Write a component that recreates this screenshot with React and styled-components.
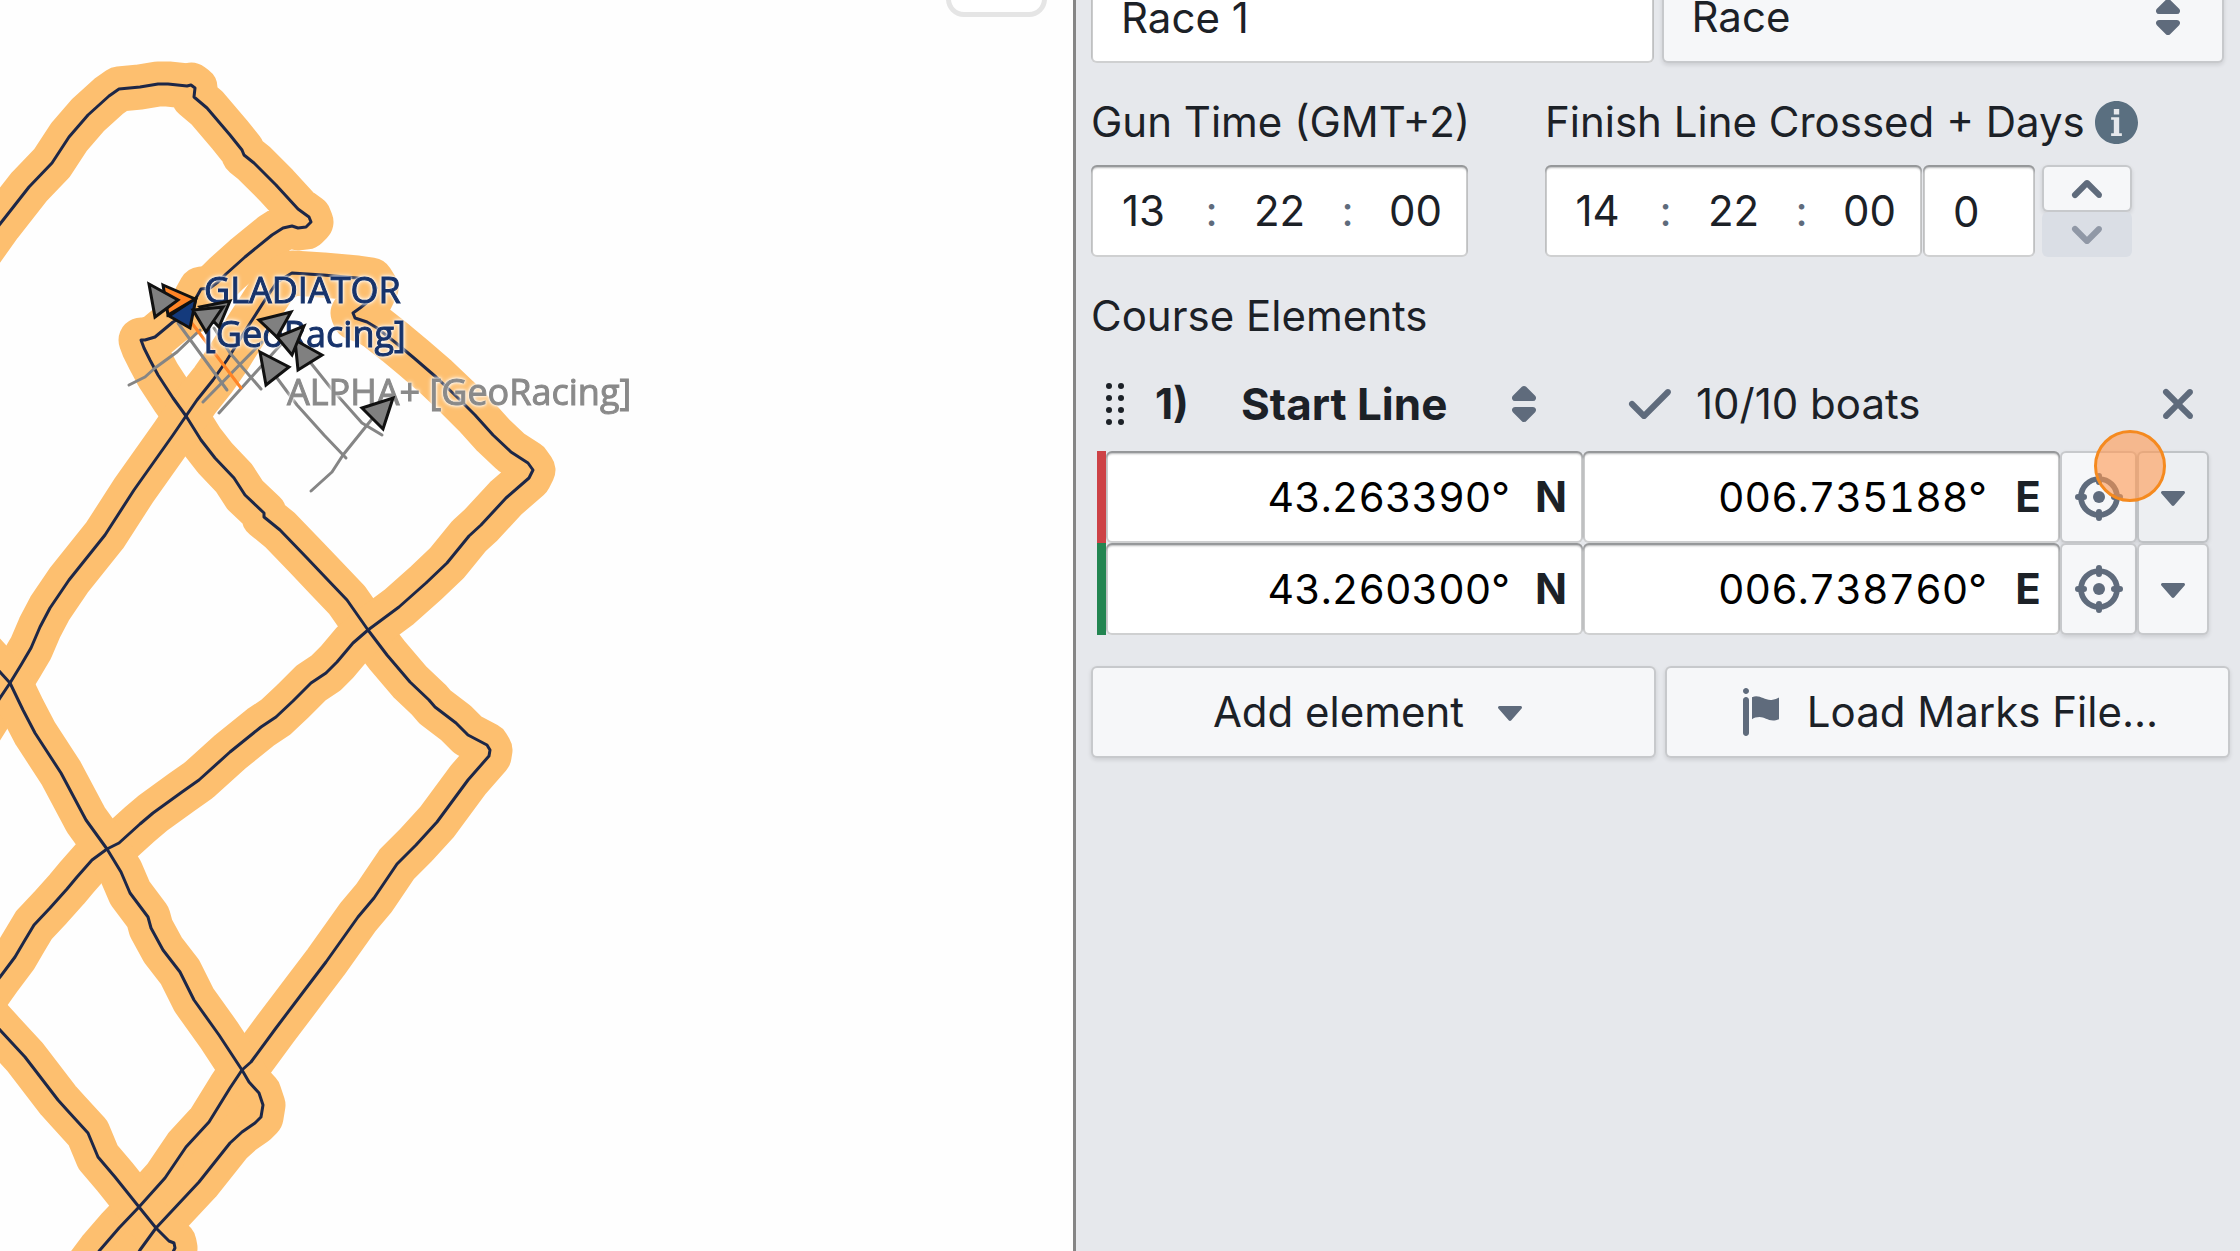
import React, { useId } from "react";
import styled, { createGlobalStyle } from "styled-components";

const GlobalStyle = createGlobalStyle`
  *, *::before, *::after { box-sizing: border-box; }
  body { margin: 0; background: #fefefe; overflow: hidden; }
  body, input, select, button {
    font-family: Inter, "Liberation Sans", sans-serif;
    font-size: 42px;
    line-height: 54px;
    color: #1c2127;
  }
  input, select, button { margin: 0; border: 0; background: none; }
`;

/* ---------- icons ---------- */

const ICON_PATHS = {
  doubleCaret:
    "M5 7h6a1.003 1.003 0 00.71-1.71l-3-3C8.53 2.11 8.28 2 8 2s-.53.11-.71.29l-3 3A1.003 1.003 0 005 7zm6 2H5a1.003 1.003 0 00-.71 1.71l3 3c.18.18.43.29.71.29s.53-.11.71-.29l3-3A1.003 1.003 0 0011 9z",
  caretDown:
    "M12 6.5c0-.28-.22-.5-.5-.5h-7a.495.495 0 00-.37.83l3.5 4c.09.1.22.17.37.17s.28-.07.37-.17l3.5-4c.08-.09.13-.2.13-.33z",
  cross:
    "M9.41 8l3.29-3.29c.19-.18.3-.43.3-.71a1.003 1.003 0 00-1.71-.71L8 6.59l-3.29-3.3a1.003 1.003 0 00-1.42 1.42L6.59 8 3.3 11.29c-.19.18-.3.43-.3.71a1.003 1.003 0 001.71.71L8 9.41l3.29 3.29c.18.19.43.3.71.3a1.003 1.003 0 00.71-1.71L9.41 8z",
  tick: "M14 3c-.28 0-.53.11-.71.29L6 10.59l-3.29-3.3a1.003 1.003 0 00-1.42 1.42l4 4c.18.18.43.29.71.29s.53-.11.71-.29l8-8A1.003 1.003 0 0014 3z",
  chevronUp:
    "M12.71 9.29l-4-4C8.53 5.11 8.28 5 8 5s-.53.11-.71.29l-4 4a1.003 1.003 0 001.42 1.42L8 7.41l3.29 3.29c.18.19.43.3.71.3a1.003 1.003 0 00.71-1.71z",
  chevronDown:
    "M12 5c-.28 0-.53.11-.71.29L8 8.59l-3.29-3.3a1.003 1.003 0 00-1.42 1.42l4 4c.18.18.43.29.71.29s.53-.11.71-.29l4-4A1.003 1.003 0 0012 5z",
  info: "M8 0C3.58 0 0 3.58 0 8s3.58 8 8 8 8-3.58 8-8-3.58-8-8-8zM7 3h2v2H7V3zm3 10H6v-1h1V7H6V6h3v6h1v1z",
  flag: "M3 3c-.55 0-1 .45-1 1v11c0 .55.45 1 1 1s1-.45 1-1V4c0-.55-.45-1-1-1zM3 0c-.55 0-1 .45-1 1s.45 1 1 1 1-.45 1-1-.45-1-1-1zM5 3.1C7.5 2 9 4.2 11.5 4c1.100-.1 1.900-.5 2.500-.8V10.400C11 11.700 9.500 9.700 7.500 9.700c-1 0-1.900.3-2.500.7z",
};

const Svg = styled.svg`
  display: block;
  flex: none;
  width: ${(p) => p.$size}px;
  height: ${(p) => p.$size}px;
  fill: ${(p) => p.$color};
  pointer-events: none;
`;

function Icon({ name, size = 48, color = "#5f6b7c" }) {
  return (
    <Svg viewBox="0 0 16 16" $size={size} $color={color} aria-hidden="true">
      <path fillRule="evenodd" d={ICON_PATHS[name]} />
    </Svg>
  );
}

function LocateIcon() {
  return (
    <Svg viewBox="0 0 16 16" $size={48} $color="#5f6b7c" aria-hidden="true">
      <circle cx="8" cy="8" r="6" fill="none" stroke="#5f6b7c" strokeWidth="1.900" />
      <circle cx="8" cy="8" r="2" />
      <path
        d="M8 1v2M8 13v2M1 8h2M13 8h2"
        stroke="#5f6b7c"
        strokeWidth="2"
        strokeLinecap="round"
      />
    </Svg>
  );
}

function DragIcon() {
  return (
    <Svg viewBox="0 0 48 48" $size={48} $color="#1c2127" aria-hidden="true">
      {[6, 18, 30, 42].map((y) => (
        <g key={y}>
          <circle cx="18" cy={y} r="3" />
          <circle cx="30" cy={y} r="3" />
        </g>
      ))}
    </Svg>
  );
}

/* ---------- layout ---------- */

const Page = styled.div`
  display: grid;
  grid-template-columns: minmax(0, 1fr) 1167px;
  min-height: 100vh;
`;

const MapPane = styled.main`
  position: relative;
  overflow: hidden;
`;

const MapCanvas = styled.svg`
  display: block;
  width: 100%;
  height: 100vh;
`;

const MapButton = styled.button`
  position: absolute;
  top: -84px;
  right: 26px;
  width: 101px;
  height: 101px;
  border: 5px solid #e5e5e5;
  border-radius: 18px;
  background: #fff;
`;

const Panel = styled.aside`
  border-left: 3px solid #858585;
  background: #e6e8ec;
  padding: 0 10px 0 15px;
  overflow: hidden;
`;

const NameRow = styled.div`
  display: grid;
  grid-template-columns: minmax(0, 1fr) minmax(0, 1fr);
  gap: 8px;
  margin: -29px 6px 32px 0;
`;

const TimeRow = styled.div`
  display: grid;
  grid-template-columns: 377px minmax(0, 1fr);
  gap: 77px;
  margin-bottom: 32px;
`;

const Label = styled.label`
  display: flex;
  align-items: center;
  gap: 10px;
  height: 54px;
  margin-bottom: 16px;
  white-space: nowrap;
`;

const SectionTitle = styled.div`
  height: 54px;
  margin-bottom: 34px;
`;

const fieldShadow = `
  border-radius: 6px;
  background: #fff;
  box-shadow: inset 0 0 0 2px rgba(17, 20, 24, 0.2), inset 0 3px 2px rgba(17, 20, 24, 0.3);
`;

const TextInput = styled.input`
  ${fieldShadow}
  width: ${(p) => p.$width || "100%"};
  height: 92px;
  padding: 0 30px;
`;

const SelectBox = styled.div`
  display: flex;
  align-items: center;
  position: relative;
  width: ${(p) => p.$width || "auto"};
  ${(p) =>
    !p.$plain &&
    `height: 92px;
     border-radius: 6px;
     background: #f6f7f9;
     box-shadow: inset 0 0 0 2px rgba(17, 20, 24, 0.2), 0 2px 4px rgba(17, 20, 24, 0.12);`}

  select {
    appearance: none;
    width: 100%;
    height: 100%;
    padding: 0 ${(p) => (p.$plain ? "0" : "30px")};
    font-size: ${(p) => (p.$plain ? 44 : 42)}px;
    font-weight: ${(p) => (p.$plain ? 700 : 400)};
  }

  svg {
    position: absolute;
    right: ${(p) => (p.$plain ? "0" : "32px")};
  }
`;

function Select({ label, value, plain, width }) {
  return (
    <SelectBox $plain={plain} $width={width}>
      <select aria-label={label} defaultValue={value}>
        <option>{value}</option>
      </select>
      <Icon name="doubleCaret" />
    </SelectBox>
  );
}

const TimeBox = styled.div`
  ${fieldShadow}
  display: flex;
  align-items: center;
  width: 377px;
  height: 92px;
  padding: 0 5px;

  input {
    width: 95px;
    padding: 0;
    text-align: center;
  }

  span {
    width: 41px;
    color: #5f6b7c;
    text-align: center;
  }
`;

function TimeField({ id, value, label }) {
  const units = ["hours", "minutes", "seconds"];
  return (
    <TimeBox role="group" aria-label={label}>
      {value.map((part, i) => (
        <React.Fragment key={units[i]}>
          {i > 0 && <span>:</span>}
          <input id={i === 0 ? id : undefined} aria-label={units[i]} defaultValue={part} />
        </React.Fragment>
      ))}
    </TimeBox>
  );
}

const FinishFields = styled.div`
  display: flex;
  gap: 1px;
`;

const Stepper = styled.div`
  display: grid;
  grid-template-rows: 47px 45px;
  width: 90px;
  margin-left: 6px;
`;

const Button = styled.button`
  display: flex;
  align-items: center;
  justify-content: center;
  gap: ${(p) => p.$gap || 0}px;
  height: ${(p) => p.$height || 92}px;
  padding: 0;
  border-radius: 6px;
  background: ${(p) => (p.$hovered ? "#edeff2" : "#f6f7f9")};
  box-shadow: inset 0 0 0 2px rgba(17, 20, 24, 0.2), 0 2px 4px rgba(17, 20, 24, 0.12);

  &:disabled {
    background: #dadee5;
    box-shadow: none;
  }
`;

const CourseElement = styled.section`
  position: relative;
  padding: 0 21px 0 6px;
  margin-bottom: 31px;
`;

const CourseHeader = styled.div`
  display: flex;
  align-items: center;
  height: 54px;
  margin-bottom: 20px;
`;

const Handle = styled.span`
  display: flex;
  justify-content: center;
  width: 36px;
  margin-right: 22px;
`;

const Order = styled.span`
  width: 86px;
  font-weight: 700;
`;

const Status = styled.span`
  display: flex;
  align-items: center;
  gap: 22px;
  margin-left: 78px;
`;

const PlainButton = styled.button`
  display: flex;
  padding: 0;
  margin: 0 7px 0 auto;
`;

const CoordRow = styled.div`
  display: grid;
  grid-template-columns: 9px minmax(0, 1fr) minmax(0, 1fr) 77px 72px;

  &::before {
    content: "";
    background: ${(p) => p.$color};
  }
`;

const CoordBox = styled.div`
  ${fieldShadow}
  display: flex;
  align-items: center;
  height: 92px;
  padding-right: 16px;

  input {
    flex: 1;
    min-width: 0;
    width: 0;
    padding: 0 25px 0 0;
    font-size: 41px;
    text-align: right;
    font-variant-numeric: tabular-nums;
    color: #000;
  }

  button {
    width: 32px;
    padding: 0;
    font-weight: 700;
    text-align: center;
  }
`;

const Actions = styled.div`
  display: grid;
  grid-template-columns: minmax(0, 1fr) minmax(0, 1fr);
  gap: 9px;
`;

const ClickMarker = styled.span`
  position: absolute;
  top: 53px;
  right: 64px;
  width: 72px;
  height: 72px;
  border: 3px solid #f58a1f;
  border-radius: 50%;
  background: rgba(255, 152, 80, 0.6);
  pointer-events: none;
`;

/* ---------- map data ---------- */

const TRACKS = [
  "-20,252 0,224 29,187 52,163 69,137 88,115 109,96 119,89 140,87 158,84 168,84 187,86 191,85 195,88 194,97 207,108 230,135 242,150 244,155 254,163 276,185 298,209 309,217 311,222 306,227 298,228 292,226 283,228 272,235 245,257 226,274 218,282 210,288 201,289 196,298 193,311 173,322 155,337 145,340 141,340 144,348 150,360 158,375 173,398 186,416 201,440 215,458 234,478 245,495 264,513 264,517 280,530 307,558 326,578 347,600 368,630 387,655 410,682 429,700 435,707 456,723 468,735 487,745 490,750 489,756 468,780 437,822 416,845 397,864 374,898 358,917 326,962 307,987 276,1028 251,1062 242,1070 230,1088 209,1122 186,1147 165,1178 139,1207 119,1228 100,1250 85,1270",
  "-20,730 0,698 10,683 21,665 31,648 40,627 50,608 69,580 105,535 134,490 173,435 186,416 197,400 213,380 227,360 247,328 265,300 277,282 292,273 323,275 357,278 371,280 376,288 370,300 360,308 353,313 355,318 367,322 377,328 396,343 414,358 436,377 457,397 475,415 493,435 511,452 528,463 533,470 529,478 506,498 481,525 469,536 447,563 426,583 399,607 368,630 353,643 337,662 326,673 311,683 293,701 276,717 261,727 230,752 199,780 182,792 153,813 140,824 119,843 107,849 92,860 77,877 67,889 50,908 34,925 25,940 15,957 0,977 -20,1005",
  "-20,650 0,672 10,683 23,710 35,733 61,773 86,820 107,849 121,872 130,893 148,917 151,928 163,950 180,972 194,1000 219,1035 242,1070 249,1082 259,1093 263,1105 261,1117 255,1123 242,1132 230,1143 199,1182 156,1228 140,1250 128,1270",
  "-20,1008 0,1030 25,1057 58,1100 67,1110 88,1133 98,1157 115,1177 139,1207 156,1228 169,1241 174,1243 175,1248 168,1262",
];

const TAILS = [
  { color: "#858585", points: "178,323 227,390" },
  { color: "#858585", points: "200,330 177,352 155,368 145,377 129,385" },
  { color: "#858585", points: "214,328 230,353 261,389" },
  { color: "#858585", points: "262,342 203,402" },
  { color: "#858585", points: "284,341 219,413" },
  { color: "#ff8426", points: "188,318 241,388" },
  { color: "#858585", points: "277,378 297,405 324,435 346,458" },
  { color: "#858585", points: "310,362 330,387 362,423 382,435" },
  { color: "#858585", points: "376,414 343,455 332,472 311,491" },
];

const BOATS = [
  { color: "#808080", points: "230,301 219,327 200,307" },
  { color: "#143a7c", points: "196,298 190,328 169,316" },
  { color: "#ff8426", points: "163,285 195,299 168,315" },
  { color: "#808080", points: "149,284 178,300 155,317" },
  { color: "#808080", points: "223,307 206,332 193,310" },
  { color: "#808080", points: "295,340 322,355 298,370" },
  { color: "#808080", points: "304,326 292,355 277,337" },
  { color: "#808080", points: "259,320 291,312 277,337" },
  { color: "#808080", points: "260,352 289,367 266,385" },
  { color: "#808080", points: "362,408 393,398 383,429" },
];

const BoatLabel = styled.text`
  font-family: "Open Sans", "Noto Sans", sans-serif;
  font-size: 36px;
  font-weight: 400;
  fill: ${(p) => p.$color};
  stroke: ${(p) => p.$color};
  stroke-width: 1px;
  filter: drop-shadow(0 0 1px #fff) drop-shadow(0 0 2px #fff);
`;

function TrackMap() {
  return (
    <MapCanvas role="img" aria-label="Race tracks">
      <g fill="none" stroke="#fdbf6f" strokeWidth="45" strokeLinejoin="round">
        {TRACKS.map((points) => (
          <polyline key={points} points={points} />
        ))}
      </g>
      <g fill="none" stroke="#1d2747" strokeWidth="3" strokeLinejoin="round">
        {TRACKS.map((points) => (
          <polyline key={points} points={points} />
        ))}
      </g>
      <g fill="none" strokeWidth="3" strokeLinejoin="round" strokeLinecap="round">
        {TAILS.map((t) => (
          <polyline key={t.points} points={t.points} stroke={t.color} />
        ))}
      </g>
      <BoatLabel $color="#17336b">
        <tspan x="204" y="303">
          GLADIATOR
        </tspan>
        <tspan x="204" y="347">
          [GeoRacing]
        </tspan>
      </BoatLabel>
      <BoatLabel $color="#8a8a8a" x="287" y="405">
        ALPHA+ [GeoRacing]
      </BoatLabel>
      <g stroke="#111" strokeWidth="3">
        {BOATS.map((b) => (
          <polygon key={b.points} points={b.points} fill={b.color} />
        ))}
      </g>
    </MapCanvas>
  );
}

/* ---------- page ---------- */

function Coordinate({ label, value, unit }) {
  return (
    <CoordBox>
      <input aria-label={label} defaultValue={value} />
      <button type="button">{unit}</button>
    </CoordBox>
  );
}

function MarkRow({ name, color, lat, lon, hovered }) {
  return (
    <CoordRow $color={color}>
      <Coordinate label={`${name} latitude`} value={lat} unit="N" />
      <Coordinate label={`${name} longitude`} value={lon} unit="E" />
      <Button type="button" aria-label="Locate on map">
        <LocateIcon />
      </Button>
      <Button type="button" aria-label="More options" $hovered={hovered}>
        <Icon name="caretDown" />
      </Button>
    </CoordRow>
  );
}

export default function App() {
  const gunId = useId();
  const finishId = useId();
  return (
    <Page>
      <GlobalStyle />
      <MapPane>
        <TrackMap />
        <MapButton type="button" aria-label="Map controls" />
      </MapPane>
      <Panel>
        <NameRow>
          <TextInput aria-label="Name" defaultValue="Race 1" />
          <Select label="Type" value="Race" />
        </NameRow>
        <TimeRow>
          <div>
            <Label htmlFor={gunId}>Gun Time (GMT+2)</Label>
            <TimeField id={gunId} label="Gun time" value={["13", "22", "00"]} />
          </div>
          <div>
            <Label htmlFor={finishId}>
              Finish Line Crossed + Days
              <Icon name="info" size={43} color="#5a6f80" />
            </Label>
            <FinishFields>
              <TimeField id={finishId} label="Finish time" value={["14", "22", "00"]} />
              <TextInput aria-label="Days" defaultValue="0" $width="112px" />
              <Stepper>
                <Button type="button" aria-label="Add a day" $height={47}>
                  <Icon name="chevronUp" />
                </Button>
                <Button type="button" aria-label="Remove a day" $height={45} disabled>
                  <Icon name="chevronDown" color="#9098a6" />
                </Button>
              </Stepper>
            </FinishFields>
          </div>
        </TimeRow>
        <SectionTitle>Course Elements</SectionTitle>
        <CourseElement>
          <CourseHeader>
            <Handle>
              <DragIcon />
            </Handle>
            <Order>1)</Order>
            <Select label="Element type" value="Start Line" plain width="307px" />
            <Status>
              <Icon name="tick" />
              10/10 boats
            </Status>
            <PlainButton type="button" aria-label="Remove element">
              <Icon name="cross" />
            </PlainButton>
          </CourseHeader>
          <MarkRow name="Port" color="#cd4246" lat="43.263390°" lon="006.735188°" hovered />
          <MarkRow name="Starboard" color="#238551" lat="43.260300°" lon="006.738760°" />
          <ClickMarker />
        </CourseElement>
        <Actions>
          <Button type="button" $gap={22}>
            Add element
            <Icon name="caretDown" />
          </Button>
          <Button type="button" $gap={22}>
            <Icon name="flag" />
            Load Marks File...
          </Button>
        </Actions>
      </Panel>
    </Page>
  );
}
